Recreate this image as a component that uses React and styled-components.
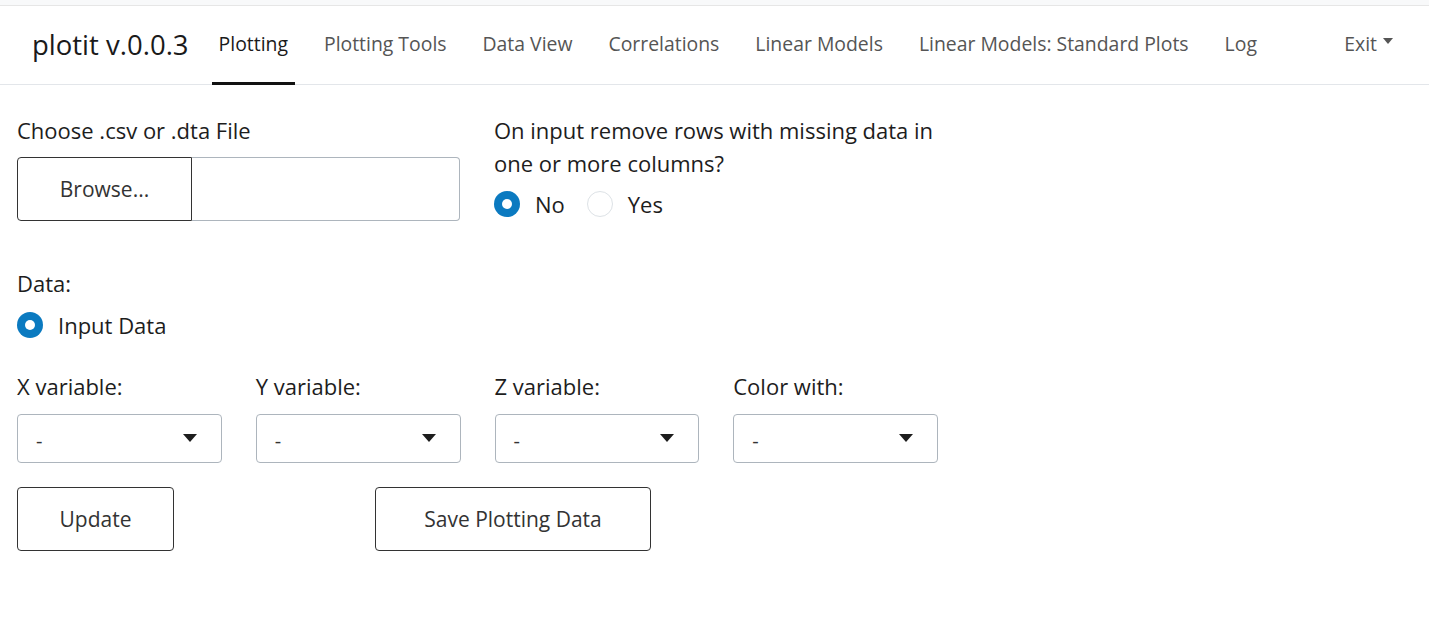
import React from "react";
import styled, { createGlobalStyle } from "styled-components";

const Global = createGlobalStyle`
  html, body { margin: 0; padding: 0; background: #fff; }
  body { font-family: "Open Sans", "DejaVu Sans", sans-serif; color: #1d1d1d; }
  * { box-sizing: border-box; }
`;

const TopStrip = styled.div`
  height: 6px;
  background: #f8f9fa;
  border-bottom: 1px solid #e6e6e6;
`;

const Nav = styled.nav`
  height: 79px;
  display: flex;
  align-items: stretch;
  padding: 0 29px 0 32px;
  border-bottom: 1px solid #e3e6ea;
`;

const Brand = styled.div`
  font-size: 27.5px;
  color: #1a1a1a;
  display: flex;
  align-items: center;
  margin-right: 23px;
  padding-bottom: 1px;
`;

const NavList = styled.div`
  display: flex;
  flex: 1;
  gap: 22px;
`;

const NavItem = styled.a`
  display: flex;
  align-items: center;
  padding: 0 7px 1px;
  font-size: 19.4px;
  color: ${(p) => (p.$active ? "#1a1a1a" : "#555")};
  border-bottom: 3px solid ${(p) => (p.$active ? "#111" : "transparent")};
  margin-bottom: -1px;
  text-decoration: none;
  white-space: nowrap;
  cursor: pointer;
`;

const Exit = styled(NavItem)`
  margin-left: auto;
  gap: 6px;
`;

const Caret = styled.span`
  display: inline-block;
  width: 0;
  height: 0;
  border-left: 5px solid transparent;
  border-right: 5px solid transparent;
  border-top: 6px solid #555;
  margin-top: -6px;
`;

const Content = styled.main`
  padding: 29px 17px 0 17px;
  width: 973px;
`;

const TopRow = styled.div`
  display: grid;
  grid-template-columns: 443px 443px;
  column-gap: 34px;
  align-items: start;
`;

const Field = styled.div`
  display: flex;
  flex-direction: column;
  margin-top: ${(p) => p.$mt || 0}px;
`;

const Label = styled.label`
  font-size: 22px;
  line-height: 33px;
  color: #1d1d1d;
  margin-bottom: ${(p) => p.$mb ?? 9}px;
`;

const FileGroup = styled.div`
  display: flex;
  height: 64px;
`;

const BrowseButton = styled.button`
  width: 175px;
  border: 1px solid #333;
  border-radius: 4px 0 0 4px;
  background: #fff;
  font-family: inherit;
  font-size: 21px;
  font-weight: 500;
  color: #333;
  padding: 0;
`;

const FileName = styled.div`
  flex: 1;
  border: 1px solid #adb5bd;
  border-left: none;
  border-radius: 0 4px 4px 0;
`;

const RadioRow = styled.div`
  display: flex;
  align-items: center;
  gap: 22px;
  height: 33px;
`;

const RadioOption = styled.label`
  display: flex;
  align-items: center;
  gap: 15px;
  font-size: 22px;
  color: #1d1d1d;
`;

const RadioDot = styled.span`
  width: 26px;
  height: 26px;
  border-radius: 50%;
  flex: none;
  background: ${(p) => (p.$checked ? "#0b7ac0" : "#fff")};
  border: ${(p) => (p.$checked ? "none" : "1px solid #dde2e6")};
  display: flex;
  align-items: center;
  justify-content: center;
  &::after {
    content: "";
    display: ${(p) => (p.$checked ? "block" : "none")};
    width: 10px;
    height: 10px;
    border-radius: 50%;
    background: #fff;
  }
`;

const SelectRow = styled.div`
  display: grid;
  width: 921px;
  grid-template-columns: repeat(4, 1fr);
  column-gap: 34px;
  margin-top: 29px;
`;

const SelectBox = styled.div`
  height: 49px;
  border: 1px solid #adb5bd;
  border-radius: 4px;
  display: flex;
  align-items: center;
  justify-content: space-between;
  padding: 4px 24px 0 18px;
  font-size: 20px;
  color: #333;
`;

const SelectCaret = styled.span`
  width: 0;
  height: 0;
  border-left: 7px solid transparent;
  border-right: 7px solid transparent;
  border-top: 8px solid #1d1d1d;
  margin-top: -6px;
`;

const ButtonRow = styled.div`
  display: flex;
  gap: 201px;
  margin-top: 24px;
`;

const Button = styled.button`
  height: 64px;
  width: ${(p) => p.$w}px;
  border: 1px solid #333;
  border-radius: 4px;
  background: #fff;
  font-family: inherit;
  font-size: 21px;
  font-weight: 500;
  color: #333;
  padding: 0;
`;

const selects = ["X variable:", "Y variable:", "Z variable:", "Color with:"];

export default function App() {
  return (
    <>
      <Global />
      <TopStrip />
      <Nav>
        <Brand>plotit v.0.0.3</Brand>
        <NavList>
          <NavItem $active>Plotting</NavItem>
          <NavItem>Plotting Tools</NavItem>
          <NavItem>Data View</NavItem>
          <NavItem>Correlations</NavItem>
          <NavItem>Linear Models</NavItem>
          <NavItem>Linear Models: Standard Plots</NavItem>
          <NavItem>Log</NavItem>
          <Exit>
            Exit <Caret />
          </Exit>
        </NavList>
      </Nav>
      <Content>
        <TopRow>
          <Field>
            <Label $mb={10}>Choose .csv or .dta File</Label>
            <FileGroup>
              <BrowseButton>Browse...</BrowseButton>
              <FileName />
            </FileGroup>
          </Field>
          <Field>
            <Label $mb={7}>
              On input remove rows with missing data in one or more columns?
            </Label>
            <RadioRow>
              <RadioOption>
                <RadioDot $checked />
                No
              </RadioOption>
              <RadioOption>
                <RadioDot />
                Yes
              </RadioOption>
            </RadioRow>
          </Field>
        </TopRow>
        <Field $mt={46}>
          <Label $mb={8}>Data:</Label>
          <RadioRow>
            <RadioOption>
              <RadioDot $checked />
              Input Data
            </RadioOption>
          </RadioRow>
        </Field>
        <SelectRow>
          {selects.map((s) => (
            <Field key={s}>
              <Label $mb={11}>{s}</Label>
              <SelectBox>
                <span>-</span>
                <SelectCaret />
              </SelectBox>
            </Field>
          ))}
        </SelectRow>
        <ButtonRow>
          <Button $w={157}>Update</Button>
          <Button $w={276}>Save Plotting Data</Button>
        </ButtonRow>
      </Content>
    </>
  );
}
